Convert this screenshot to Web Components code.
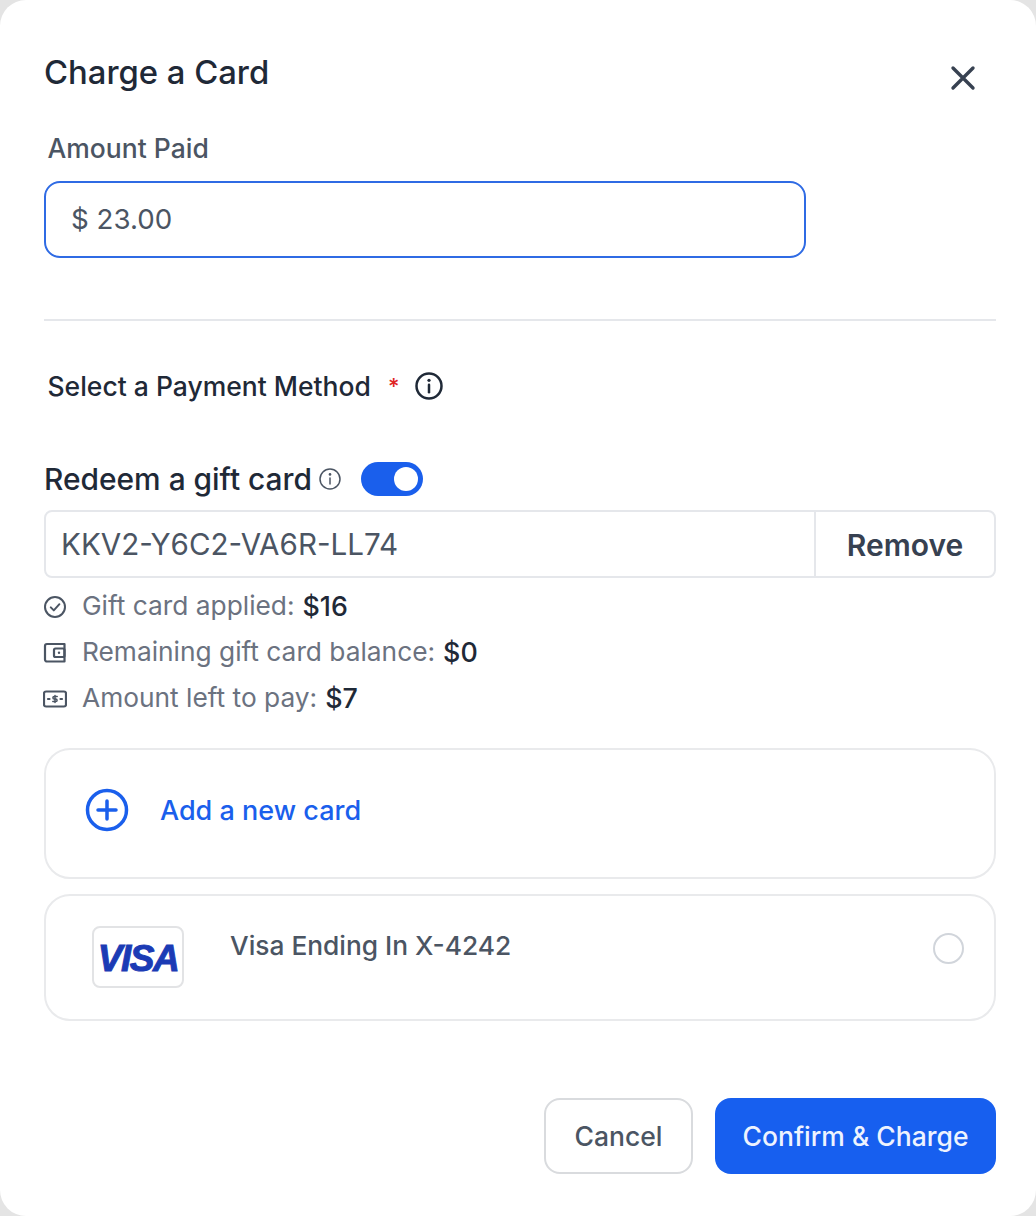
<!DOCTYPE html>
<html lang="en">
<head>
<meta charset="utf-8">
<title>Charge a Card</title>
<style>
  html, body { margin: 0; height: 100%; background: #e4e4e4; }
  body { font-family: Inter, "Liberation Sans", sans-serif; }
</style>
</head>
<body>
<charge-modal>
  <modal-header slot="header">Charge a Card</modal-header>
  <amount-field slot="amount" label="Amount Paid" value="$ 23.00"></amount-field>
  <method-heading slot="method">Select a Payment Method</method-heading>
  <gift-card slot="gift" code="KKV2-Y6C2-VA6R-LL74">
    <info-row icon="check" label="Gift card applied:" value="$16"></info-row>
    <info-row icon="wallet" label="Remaining gift card balance:" value="$0"></info-row>
    <info-row icon="cash" label="Amount left to pay:" value="$7"></info-row>
  </gift-card>
  <add-card slot="cards">Add a new card</add-card>
  <saved-card slot="cards">Visa Ending In X-4242</saved-card>
  <modal-actions slot="actions"></modal-actions>
</charge-modal>

<script>
const INFO_PATH = `
  <circle cx="12" cy="12" r="10" fill="none" stroke="currentColor"/>
  <path d="M12 11v6" fill="none" stroke="currentColor" stroke-linecap="round"/>
  <circle cx="12" cy="7.4" r="1.3" fill="currentColor"/>`;

const ROW_ICONS = {
  check: `<svg width="24" height="24" viewBox="0 0 24 24" fill="none" stroke="currentColor" stroke-width="2" stroke-linecap="round" stroke-linejoin="round">
      <circle cx="12" cy="12" r="10"/><path d="M7.8 12.4l3 3 5.6-6.2"/></svg>`,
  wallet: `<svg width="24" height="24" viewBox="0 0 24 24" fill="none" stroke="currentColor" stroke-width="2.200" stroke-linejoin="round">
      <path d="M2 5a2 2 0 0 1 2-2h17.500v17.500H4a2 2 0 0 1-2-2z"/><rect x="11" y="7.500" width="10.500" height="8.500" rx="1.500"/><circle cx="16" cy="11.800" r="1.200" fill="currentColor" stroke="none"/></svg>`,
  cash: `<svg width="24" height="24" viewBox="0 0 24 24" fill="none" stroke="currentColor" stroke-width="2.200" stroke-linejoin="round">
      <rect x="1" y="4.500" width="22" height="15" rx="2"/>
      <path d="M14.200 9.400h-3a1.200 1.200 0 0 0 0 2.600h1.600a1.200 1.200 0 0 1 0 2.600h-3M12 8.400v7.200" stroke-width="1.500" stroke-linecap="round"/>
      <path d="M5 12h1.500M17.500 12h1.500" stroke-linecap="round"/></svg>`
};

class ChargeModal extends HTMLElement {
  constructor() {
    super();
    this.attachShadow({ mode: 'open' });
    this.shadowRoot.innerHTML = `
      <style>
        :host { display: block; height: 1216px; box-sizing: border-box; background: #fff; border-radius: 26px; padding: 0 40px 0 44px; overflow: hidden; }
        .cards { display: flex; flex-direction: column; gap: 15px; margin-top: 34px; }
      </style>
      <slot name="header"></slot>
      <slot name="amount"></slot>
      <slot name="method"></slot>
      <slot name="gift"></slot>
      <div class="cards"><slot name="cards"></slot></div>
      <slot name="actions"></slot>
    `;
  }
}

class ModalHeader extends HTMLElement {
  constructor() {
    super();
    this.attachShadow({ mode: 'open' });
    this.shadowRoot.innerHTML = `
      <style>
        :host { display: flex; justify-content: space-between; height: 132px; box-sizing: border-box; padding-top: 51px; }
        h2 { margin: 0; font: 500 32.800px/42px Inter, "Liberation Sans", sans-serif; color: #1f2937; }
        svg { margin: 13px 19px 0 0; color: #374151; }
      </style>
      <h2><slot></slot></h2>
      <svg width="28" height="28" viewBox="0 0 28 28" fill="none" stroke="currentColor" stroke-width="3.400" stroke-linecap="round"><path d="M4 4l20 20M24 4L4 24"/></svg>
    `;
  }
}

class AmountField extends HTMLElement {
  constructor() {
    super();
    this.attachShadow({ mode: 'open' });
    this.shadowRoot.innerHTML = `
      <style>
        :host { display: block; height: 187px; border-bottom: 2px solid #e5e7eb; box-sizing: content-box; }
        label { display: block; margin: 0 0 17px 3.500px; font: 500 26.500px/32px Inter, "Liberation Sans", sans-serif; color: #4b5563; }
        .box { width: 762px; height: 77px; box-sizing: border-box; border: 2px solid #2f6be4; border-radius: 16px; padding: 1px 0 0 25px; display: flex; align-items: center; font: 400 27.700px/1 Inter, "Liberation Sans", sans-serif; color: #4b5563; }
      </style>
      <label></label>
      <div class="box"></div>
    `;
    this.shadowRoot.querySelector('label').textContent = this.getAttribute('label');
    this.shadowRoot.querySelector('.box').textContent = this.getAttribute('value');
  }
}

class MethodHeading extends HTMLElement {
  constructor() {
    super();
    this.attachShadow({ mode: 'open' });
    this.shadowRoot.innerHTML = `
      <style>
        :host { display: flex; align-items: center; height: 34px; margin: 48px 0 0 3.500px; font: 500 26.500px/34px Inter, "Liberation Sans", sans-serif; color: #1f2937; }
        .req { color: #e02424; margin-left: 17px; font-size: 22px; }
        svg { margin-left: 15px; color: #1f2937; }
      </style>
      <slot></slot><span class="req">*</span>
      <svg width="30" height="30" viewBox="0 0 24 24" stroke-width="2">${INFO_PATH}</svg>
    `;
  }
}

class GiftCard extends HTMLElement {
  constructor() {
    super();
    this.attachShadow({ mode: 'open' });
    this.shadowRoot.innerHTML = `
      <style>
        :host { display: block; margin-top: 58px; }
        .top { display: flex; align-items: center; height: 36px; font: 500 29.900px/36px Inter, "Liberation Sans", sans-serif; color: #1f2937; }
        .top svg { margin-left: 6px; color: #4b5563; }
        .toggle { width: 62px; height: 34px; margin-left: 19px; border-radius: 17px; background: #1a5fec; display: flex; align-items: center; justify-content: flex-end; padding-right: 5px; box-sizing: border-box; }
        .toggle i { width: 24px; height: 24px; border-radius: 50%; background: #fff; }
        .code { display: flex; height: 68px; box-sizing: border-box; margin-top: 13px; border: 2px solid #e5e7eb; border-radius: 8px; }
        .value { flex: 1; display: flex; align-items: center; padding: 2px 0 0 15px; font: 400 29.600px/1 Inter, "Liberation Sans", sans-serif; color: #4b5563; }
        .remove { width: 178px; border-left: 2px solid #e5e7eb; display: flex; align-items: center; justify-content: center; padding-top: 2px; font: 600 30px/1 Inter, "Liberation Sans", sans-serif; color: #374151; }
        .rows { display: flex; flex-direction: column; gap: 14px; margin-top: 12px; }
      </style>
      <div class="top">Redeem a gift card
        <svg width="24" height="24" viewBox="0 0 24 24" stroke-width="1.500">${INFO_PATH}</svg>
        <span class="toggle"><i></i></span>
      </div>
      <div class="code"><span class="value"></span><span class="remove">Remove</span></div>
      <div class="rows"><slot></slot></div>
    `;
    this.shadowRoot.querySelector('.value').textContent = this.getAttribute('code');
  }
}

class InfoRow extends HTMLElement {
  constructor() {
    super();
    this.attachShadow({ mode: 'open' });
    this.shadowRoot.innerHTML = `
      <style>
        :host { display: flex; align-items: center; height: 32px; font: 400 26.300px/32px Inter, "Liberation Sans", sans-serif; color: #6b7280; }
        .icon { width: 24px; height: 24px; color: #4b5563; margin-left: -1px; margin-right: 15px; }
        b { font-weight: 500; font-size: 26.800px; color: #1f2937; margin-left: 8px; }
      </style>
      <span class="icon">${ROW_ICONS[this.getAttribute('icon')]}</span>
      <span class="label"></span><b></b>
    `;
    this.shadowRoot.querySelector('.label').textContent = this.getAttribute('label');
    this.shadowRoot.querySelector('b').textContent = this.getAttribute('value');
  }
}

class AddCard extends HTMLElement {
  constructor() {
    super();
    this.attachShadow({ mode: 'open' });
    this.shadowRoot.innerHTML = `
      <style>
        :host { display: flex; align-items: center; height: 131px; box-sizing: border-box; border: 2px solid #e9eaec; border-radius: 26px; padding: 0 0 7px 39px; font: 500 27px/1 Inter, "Liberation Sans", sans-serif; color: #1a5fec; }
        svg { margin-right: 31px; }
      </style>
      <svg width="44" height="44" viewBox="0 0 44 44" fill="none" stroke="currentColor" stroke-width="3.500" stroke-linecap="round"><circle cx="22" cy="22" r="19.500"/><path d="M22 13v18M13 22h18"/></svg>
      <slot></slot>
    `;
  }
}

class SavedCard extends HTMLElement {
  constructor() {
    super();
    this.attachShadow({ mode: 'open' });
    this.shadowRoot.innerHTML = `
      <style>
        :host { display: flex; align-items: flex-start; height: 127px; box-sizing: border-box; border: 2px solid #e9eaec; border-radius: 26px; padding: 30px 30px 0 46px; font: 500 26.300px/1 Inter, "Liberation Sans", sans-serif; color: #4b5563; }
        .logo { width: 92px; height: 62px; box-sizing: border-box; border: 2px solid #e2e3e5; border-radius: 8px; display: flex; align-items: center; justify-content: center; font: italic 700 37px/1 "Liberation Sans", sans-serif; color: #1b3bb5; letter-spacing: -1.500px; -webkit-text-stroke: 1px #1b3bb5; padding-top: 2px; }
        .name { flex: 1; margin: 7px 0 0 46px; }
        .radio { width: 31px; height: 31px; box-sizing: border-box; margin-top: 7px; border: 2px solid #d1d5db; border-radius: 50%; }
      </style>
      <span class="logo">VISA</span>
      <span class="name"><slot></slot></span>
      <span class="radio"></span>
    `;
  }
}

class ModalActions extends HTMLElement {
  constructor() {
    super();
    this.attachShadow({ mode: 'open' });
    this.shadowRoot.innerHTML = `
      <style>
        :host { display: flex; justify-content: flex-end; gap: 22px; margin-top: 77px; }
        button { height: 76px; box-sizing: border-box; border-radius: 16px; font: 500 26.500px/1 Inter, "Liberation Sans", sans-serif; padding: 0; }
        .cancel { width: 149px; background: #fff; border: 2px solid #d9dbde; color: #4b5563; }
        .confirm { width: 281px; background: #175fef; border: 0; color: #eef3fe; }
      </style>
      <button class="cancel">Cancel</button>
      <button class="confirm">Confirm &amp; Charge</button>
    `;
  }
}

customElements.define('charge-modal', ChargeModal);
customElements.define('modal-header', ModalHeader);
customElements.define('amount-field', AmountField);
customElements.define('method-heading', MethodHeading);
customElements.define('gift-card', GiftCard);
customElements.define('info-row', InfoRow);
customElements.define('add-card', AddCard);
customElements.define('saved-card', SavedCard);
customElements.define('modal-actions', ModalActions);
</script>
</body>
</html>
